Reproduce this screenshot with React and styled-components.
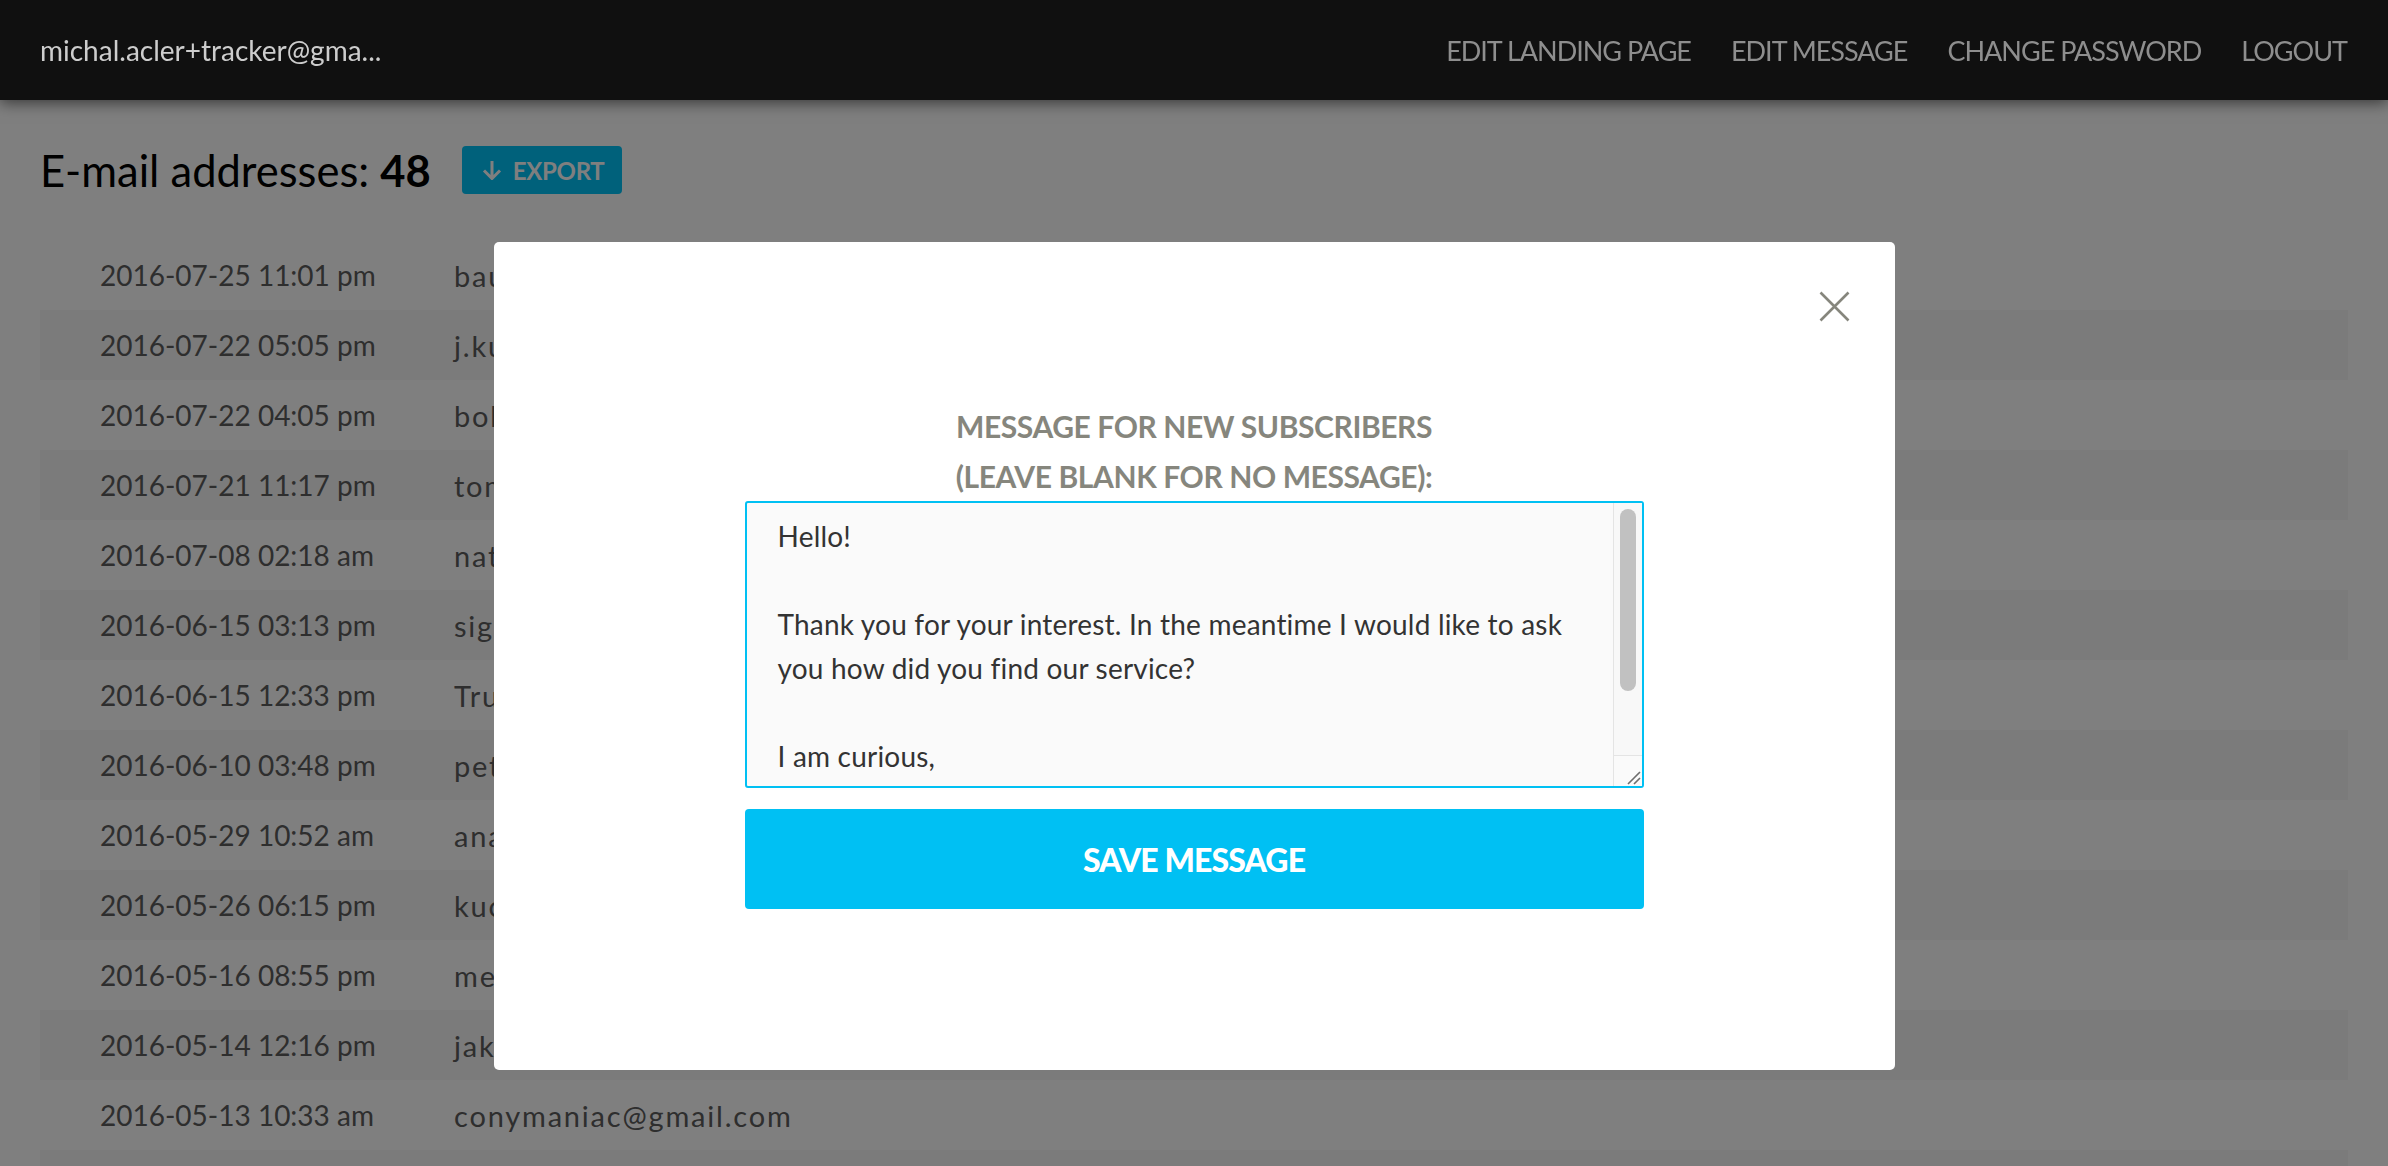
import React from "react";
import styled, { createGlobalStyle } from "styled-components";

const GlobalStyle = createGlobalStyle`
  html, body {
    margin: 0;
    padding: 0;
    overflow: hidden;
    background: #ffffff;
    font-family: Lato, "Open Sans", Arial, sans-serif;
  }
  * {
    box-sizing: border-box;
  }
`;

const Header = styled.header`
  position: relative;
  z-index: 20;
  height: 100px;
  padding: 0 41px 0 40px;
  display: flex;
  align-items: center;
  justify-content: space-between;
  background: #101010;
  box-shadow: 0 3px 14px rgba(0, 0, 0, 0.55);
`;

const UserName = styled.div`
  font-size: 28px;
  color: #cdcdcd;
`;

const Nav = styled.nav`
  display: flex;
  gap: 40px;
`;

const NavLink = styled.a`
  font-size: 27px;
  color: #8e8e8e;
  text-transform: uppercase;
  text-decoration: none;
  letter-spacing: -1px;
`;

const Main = styled.main`
  padding: 46px 40px 0;
`;

const TitleRow = styled.div`
  display: flex;
  align-items: center;
  gap: 31px;
  height: 48px;
`;

const Title = styled.h1`
  margin: 0;
  font-size: 43.5px;
  font-weight: 400;
  color: #000;
  b {
    font-weight: 700;
  }
`;

const ExportButton = styled.button`
  display: flex;
  align-items: center;
  gap: 10px;
  height: 48px;
  padding: 0 18px 0 19px;
  border: none;
  border-radius: 4px;
  background: #00c2f7;
  color: #fff;
  font-family: inherit;
  font-size: 24px;
  font-weight: 700;
  letter-spacing: -0.3px;
`;

const List = styled.div`
  margin-top: 46px;
`;

const Row = styled.div`
  display: flex;
  align-items: center;
  height: 70px;
  padding-left: 60px;
  background: ${(p) => (p.$striped ? "#f6f6f6" : "transparent")};
  font-size: 28px;
  color: #5c5c5c;
`;

const DateCell = styled.span`
  width: 354px;
`;

const EmailCell = styled.span`
  font-size: 29px;
  letter-spacing: 1.8px;
`;

const Overlay = styled.div`
  position: fixed;
  inset: 0;
  z-index: 10;
  display: flex;
  justify-content: center;
  align-items: flex-start;
  padding-top: 242px;
  background: rgba(0, 0, 0, 0.5);
`;

const Modal = styled.div`
  position: relative;
  width: 1401px;
  height: 828px;
  padding-top: 159px;
  display: flex;
  flex-direction: column;
  align-items: center;
  background: #fff;
  border-radius: 5px;
`;

const CloseButton = styled.button`
  position: absolute;
  top: 49px;
  right: 45px;
  width: 31px;
  height: 31px;
  padding: 0;
  border: none;
  background: none;
  color: #86867d;
`;

const ModalTitle = styled.h2`
  margin: 0;
  font-size: 30px;
  line-height: 50px;
  font-weight: 700;
  color: #86867d;
  text-align: center;
  text-transform: uppercase;
  letter-spacing: -0.4px;
`;

const InputWrap = styled.div`
  position: relative;
  width: 899px;
  height: 287px;
`;

const MessageInput = styled.textarea`
  display: block;
  width: 100%;
  height: 100%;
  padding: 11px 62px 0 31px;
  border: 2px solid #00c0f3;
  border-radius: 3px;
  outline: none;
  overflow: hidden;
  background: #fafafa;
  color: #333;
  font-family: inherit;
  font-size: 28px;
  letter-spacing: 0.2px;
  line-height: 44px;
  resize: none;
`;

const ScrollTrack = styled.div`
  position: absolute;
  top: 2px;
  right: 2px;
  bottom: 2px;
  width: 29px;
  display: flex;
  flex-direction: column;
  background: #f8f8f8;
  border-left: 1px solid #e4e4e4;
`;

const ScrollThumb = styled.div`
  height: 182px;
  margin: 6px 0 0 6px;
  width: 16px;
  border-radius: 8px;
  background: #c1c1c1;
`;

const ResizeCorner = styled.div`
  margin-top: auto;
  height: 31px;
  display: flex;
  align-items: flex-end;
  justify-content: flex-end;
  padding: 0 1px 1px 0;
  background: #fafafa;
  border-top: 1px solid #e4e4e4;
  color: #6d6d6d;
`;

const SaveButton = styled.button`
  width: 899px;
  height: 100px;
  margin-top: 21px;
  border: none;
  border-radius: 4px;
  background: #00c0f3;
  color: #fff;
  font-family: inherit;
  font-size: 32px;
  font-weight: 900;
  text-transform: uppercase;
  letter-spacing: -0.9px;
`;

const subscribers = [
  ["2016-07-25 11:01 pm", "baumanpetr@seznam.cz"],
  ["2016-07-22 05:05 pm", "j.kucera@email.cz"],
  ["2016-07-22 04:05 pm", "bohumil.vesely@gmail.com"],
  ["2016-07-21 11:17 pm", "tomas.novak@centrum.cz"],
  ["2016-07-08 02:18 am", "natalie.horakova@gmail.com"],
  ["2016-06-15 03:13 pm", "sigmund.kral@post.cz"],
  ["2016-06-15 12:33 pm", "Truhlarstvi.Dvorak@seznam.cz"],
  ["2016-06-10 03:48 pm", "petra.svobodova@gmail.com"],
  ["2016-05-29 10:52 am", "ana.maria.lopez@gmail.com"],
  ["2016-05-26 06:15 pm", "kuchar.jan@email.cz"],
  ["2016-05-16 08:55 pm", "mejstrik.pavel@gmail.com"],
  ["2016-05-14 12:16 pm", "jakub.prochazka@seznam.cz"],
  ["2016-05-13 10:33 am", "conymaniac@gmail.com"],
  ["2016-05-12 09:41 pm", "lenka.benesova@gmail.com"],
];

const message =
  "Hello!\n\nThank you for your interest. In the meantime I would like to ask you how did you find our service?\n\nI am curious,\n\nMichal";

function ArrowDown() {
  return (
    <svg width="22" height="20" viewBox="0 0 22 20" fill="none">
      <path
        d="M11 1V18M3 10.5L11 18.5L19 10.5"
        stroke="currentColor"
        strokeWidth="3"
      />
    </svg>
  );
}

function CloseIcon() {
  return (
    <svg width="31" height="31" viewBox="0 0 31 31">
      <path
        d="M1.5 1.5L29.5 29.5M29.5 1.5L1.5 29.5"
        stroke="currentColor"
        strokeWidth="2.6"
      />
    </svg>
  );
}

function ResizeGrip() {
  return (
    <svg width="15" height="15" viewBox="0 0 15 15">
      <path
        d="M14 2L2 14M14 8L8 14"
        stroke="currentColor"
        strokeWidth="1.6"
      />
    </svg>
  );
}

export default function App() {
  return (
    <>
      <GlobalStyle />
      <Header>
        <UserName>michal.acler+tracker@gma...</UserName>
        <Nav>
          <NavLink>Edit landing page</NavLink>
          <NavLink>Edit message</NavLink>
          <NavLink>Change password</NavLink>
          <NavLink>Logout</NavLink>
        </Nav>
      </Header>

      <Main>
        <TitleRow>
          <Title>
            E-mail addresses: <b>48</b>
          </Title>
          <ExportButton>
            <ArrowDown />
            EXPORT
          </ExportButton>
        </TitleRow>
        <List>
          {subscribers.map(([date, email], index) => (
            <Row key={date + email} $striped={index % 2 === 1}>
              <DateCell>{date}</DateCell>
              <EmailCell>{email}</EmailCell>
            </Row>
          ))}
        </List>
      </Main>

      <Overlay>
        <Modal>
          <CloseButton>
            <CloseIcon />
          </CloseButton>
          <ModalTitle>
            Message for new subscribers
            <br />
            (leave blank for no message):
          </ModalTitle>
          <InputWrap>
            <MessageInput defaultValue={message} />
            <ScrollTrack>
              <ScrollThumb />
              <ResizeCorner>
                <ResizeGrip />
              </ResizeCorner>
            </ScrollTrack>
          </InputWrap>
          <SaveButton>Save message</SaveButton>
        </Modal>
      </Overlay>
    </>
  );
}
